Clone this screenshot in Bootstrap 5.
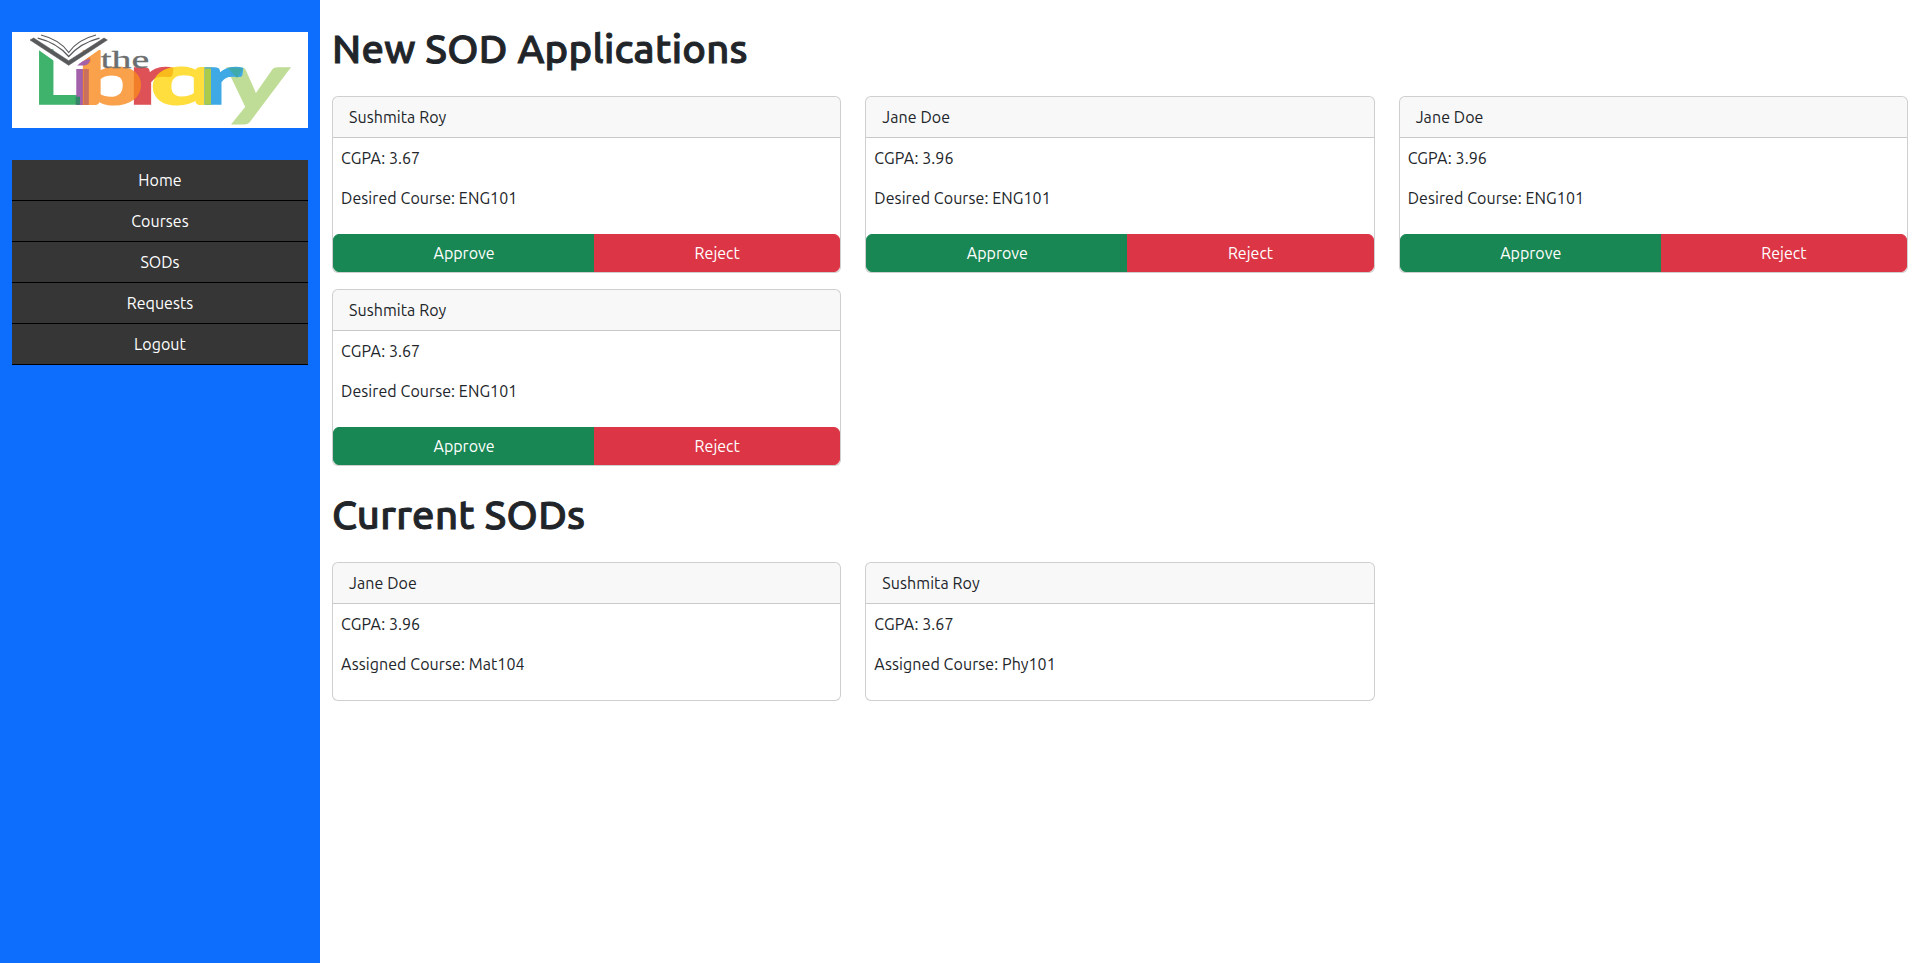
<!DOCTYPE html>
<html lang="en">
<head>
<meta charset="utf-8">
<meta name="viewport" content="width=device-width, initial-scale=1">
<title>SOD Applications</title>
<link href="https://cdn.jsdelivr.net/npm/bootstrap@5.3.0/dist/css/bootstrap.min.css" rel="stylesheet">
<style>
  body { font-family: Ubuntu, "Noto Sans", sans-serif; }
  h1 { font-size: 2.5rem; padding-top: 1px; height: 48px; letter-spacing: .3px; -webkit-text-stroke: 1px currentColor; }
  .sidebar { width: 320px; padding: 32px 12px; }
  .logo { height: 96px; margin-bottom: 32px; }
  .logo text { font-family: Lato, sans-serif; font-weight: 700; font-size: 100px; }
  .logo .the-word { font-family: "Liberation Serif", serif; font-weight: 400; }
  .menu-link { background: #363636; border-bottom: 1px solid #000; letter-spacing: .05px; }
  .card { --bs-card-border-color: rgba(0, 0, 0, .19); letter-spacing: .08px; }
</style>
</head>
<body>
<div class="d-flex min-vh-100">
  <aside class="sidebar bg-primary flex-shrink-0">
    <svg class="logo d-block w-100 bg-white" viewBox="0 0 296 96" role="img" aria-label="The Library">
      <text fill="#3fb36c" stroke="#3fb36c" stroke-width="2" transform="matrix(.93 0 0 .746 20.6 72.2)">L</text>
      <text fill="#a360ab" transform="matrix(1 0 0 .71 57.7 72.7)">ı</text>
      <ellipse cx="71.7" cy="28" rx="7" ry="5.3" fill="#a360ab"/>
      <text fill="#dd5157" stroke="#dd5157" stroke-width="2" transform="matrix(1.203 0 0 .71 115.8 72.2)">r</text>
      <text fill="#f98a20" stroke="#f98a20" stroke-width="3" opacity=".8" transform="matrix(1.16 0 0 .71 65.6 72.2)">b</text>
      <text fill="#ffd60d" stroke="#ffd60d" stroke-width="3" opacity=".8" transform="matrix(1.18 0 0 .7 138.5 72.2)">ɑ</text>
      <text fill="#c0dd98" stroke="#c0dd98" stroke-width="2" transform="matrix(1.17 0 -.118 .82 209.6 77.5)">y</text>
      <text fill="#3fa9e6" stroke="#3fa9e6" stroke-width="2" transform="matrix(1.18 0 0 .71 186.6 72.2)">r</text>
      <path d="M216 36.300Q223 34.500 230.700 37L225 46Z" fill="#40a9ab"/>
      <path d="M193 36.5H199V72.7H193Z" fill="#a9ca4b"/>
      <path d="M72 37H76.7V72.7H72Z" fill="#c96f60"/>
      <path d="M63.7 64.7H68V72.7H63.7Z" fill="#36846a"/>
      <text class="the-word" fill="#6d6e70" stroke="#6d6e70" stroke-width="1" transform="matrix(.4 0 0 .257 88.5 35.7)">the</text>
      <path d="M22 6V14.8L56.7 39.3 91.5 14.8V6L56.7 29Z" fill="#fff"/>
      <path d="M65 33.5 71 29.3Q78 26 78 28Q77 33.5 70 33.5Z" fill="#a360ab"/>
      <path d="M18 8 21.7 6 56.7 28.7 92 6 95.3 8 56.7 33.3Z" fill="#58595b" stroke="#58595b" stroke-width=".6"/>
      <g fill="none" stroke="#58595b" stroke-width="1.2">
        <path d="M25.7 6.1C38 9 49 15.5 56.7 24.5 64.5 15.5 76 9 87.5 6.1"/>
        <path d="M29 3C41 6 51 12 56.7 20.5 62.5 12 72 6 84 3"/>
      </g>
    </svg>
    <nav class="text-center">
      <a class="menu-link d-block p-2 text-white text-decoration-none" href="#">Home</a>
      <a class="menu-link d-block p-2 text-white text-decoration-none" href="#">Courses</a>
      <a class="menu-link d-block p-2 text-white text-decoration-none" href="#">SODs</a>
      <a class="menu-link d-block p-2 text-white text-decoration-none" href="#">Requests</a>
      <a class="menu-link d-block p-2 text-white text-decoration-none" href="#">Logout</a>
    </nav>
  </aside>
  <main class="container-fluid">
    <h1 class="my-4">New SOD Applications</h1>
    <div class="row">
      <div class="col-4">
        <div class="card mb-3">
          <div class="card-header">Sushmita Roy</div>
          <div class="card-body p-0">
            <div class="p-2"><p>CGPA: 3.67</p><p class="mb-2 pb-2">Desired Course: ENG101</p></div>
            <div class="btn-group w-100"><button class="btn btn-success">Approve</button><button class="btn btn-danger">Reject</button></div>
          </div>
        </div>
      </div>
      <div class="col-4">
        <div class="card mb-3">
          <div class="card-header">Jane Doe</div>
          <div class="card-body p-0">
            <div class="p-2"><p>CGPA: 3.96</p><p class="mb-2 pb-2">Desired Course: ENG101</p></div>
            <div class="btn-group w-100"><button class="btn btn-success">Approve</button><button class="btn btn-danger">Reject</button></div>
          </div>
        </div>
      </div>
      <div class="col-4">
        <div class="card mb-3">
          <div class="card-header">Jane Doe</div>
          <div class="card-body p-0">
            <div class="p-2"><p>CGPA: 3.96</p><p class="mb-2 pb-2">Desired Course: ENG101</p></div>
            <div class="btn-group w-100"><button class="btn btn-success">Approve</button><button class="btn btn-danger">Reject</button></div>
          </div>
        </div>
      </div>
      <div class="col-4">
        <div class="card">
          <div class="card-header">Sushmita Roy</div>
          <div class="card-body p-0">
            <div class="p-2"><p>CGPA: 3.67</p><p class="mb-2 pb-2">Desired Course: ENG101</p></div>
            <div class="btn-group w-100"><button class="btn btn-success">Approve</button><button class="btn btn-danger">Reject</button></div>
          </div>
        </div>
      </div>
    </div>
    <h1 class="my-4">Current SODs</h1>
    <div class="row">
      <div class="col-4">
        <div class="card">
          <div class="card-header">Jane Doe</div>
          <div class="card-body p-2"><p>CGPA: 3.96</p><p class="mb-2 pb-2">Assigned Course: Mat104</p></div>
        </div>
      </div>
      <div class="col-4">
        <div class="card">
          <div class="card-header">Sushmita Roy</div>
          <div class="card-body p-2"><p>CGPA: 3.67</p><p class="mb-2 pb-2">Assigned Course: Phy101</p></div>
        </div>
      </div>
    </div>
  </main>
</div>
<script src="https://cdn.jsdelivr.net/npm/bootstrap@5.3.0/dist/js/bootstrap.bundle.min.js"></script>
</body>
</html>
